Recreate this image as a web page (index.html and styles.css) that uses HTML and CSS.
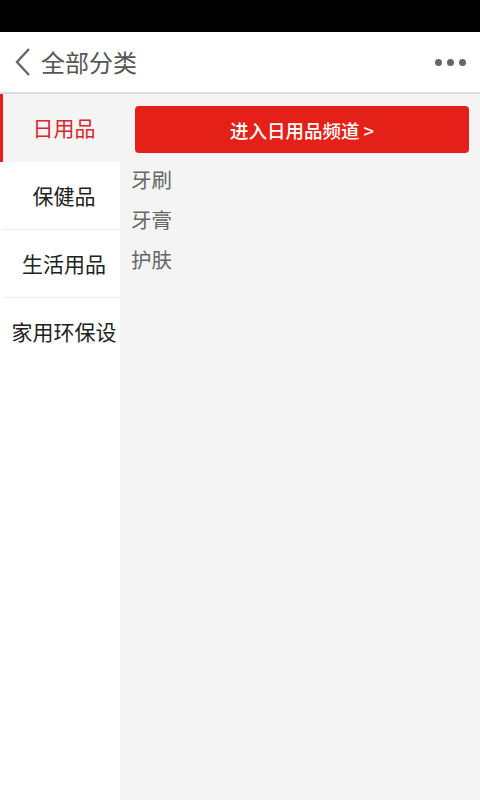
FILE: index.html
```html
<!DOCTYPE html>
<html lang="zh-CN">
<head>
    <meta charset="UTF-8">
    <meta name="viewport" content="width=device-width, initial-scale=1.0">
    <title>全部分类</title>
    <link rel="stylesheet" href="styles.css">
</head>
<body>
    <div class="status-bar"></div>
    <div class="header">
        <span class="back">
            <svg width="18" height="30" viewBox="0 0 18 30"><path d="M15 2 L3 15 L15 28" fill="none" stroke="#666" stroke-width="2.4"/></svg>
        </span>
        <span class="title">全部分类</span>
        <span class="more"><i></i><i></i><i></i></span>
    </div>
    <div class="main">
        <!-- category list on the left -->
        <ul class="sidebar">
            <li class="active">日用品</li>
            <li>保健品</li>
            <li>生活用品</li>
            <li>家用环保设</li>
        </ul>
        <div class="content">
            <button class="channel-btn">进入日用品频道 &gt;</button>
            <ul class="sub-list">
                <li>牙刷</li>
                <li>牙膏</li>
                <li>护肤</li>
            </ul>
        </div>
    </div>
</body>
</html>
```

FILE: styles.css
```css
* { margin: 0; padding: 0; box-sizing: border-box; }
html, body { height: 100%; }
body { font-family: "Noto Sans CJK SC", "Noto Sans", sans-serif; background: #f4f4f4; display: flex; flex-direction: column; overflow: hidden; }
.status-bar { height: 32px; background: #000; flex-shrink: 0; }
.header { height: 62px; background: #fff; border-bottom: 2px solid #ddd; display: flex; align-items: center; padding: 0 14px; flex-shrink: 0; }
.back { display: flex; align-items: center; width: 27px; }
.title { font-size: 24px; color: #555; flex: 1; line-height: 1; }
.more { display: flex; gap: 5px; }
.more i { width: 7px; height: 7px; border-radius: 50%; background: #666; }
.main { flex: 1; display: flex; }
.sidebar { width: 120px; background: #fff; list-style: none; }
.sidebar li { height: 68px; display: flex; align-items: center; justify-content: center; font-size: 21px; color: #222; border-bottom: 1px solid #eee; margin-left: 3px; padding-left: 5px; padding-bottom: 2px; white-space: nowrap; }
.sidebar li:last-child { border-bottom: none; }
.sidebar li.active { background: #f4f4f4; color: #d9272e; border-left: 3px solid #e52019; margin-left: 0; border-bottom: none; }
.content { flex: 1; padding: 12px 13px 0 11px; }
.channel-btn { height: 47px; margin-left: 4px; width: calc(100% - 2px); background: #e52019; color: #fff; border: none; border-radius: 4px; font-size: 18.5px; font-weight: 500; font-family: inherit; }
.sub-list { list-style: none; margin-top: 11px; }
.sub-list li { font-size: 20.5px; color: #666; height: 40px; line-height: 30px; }
```
